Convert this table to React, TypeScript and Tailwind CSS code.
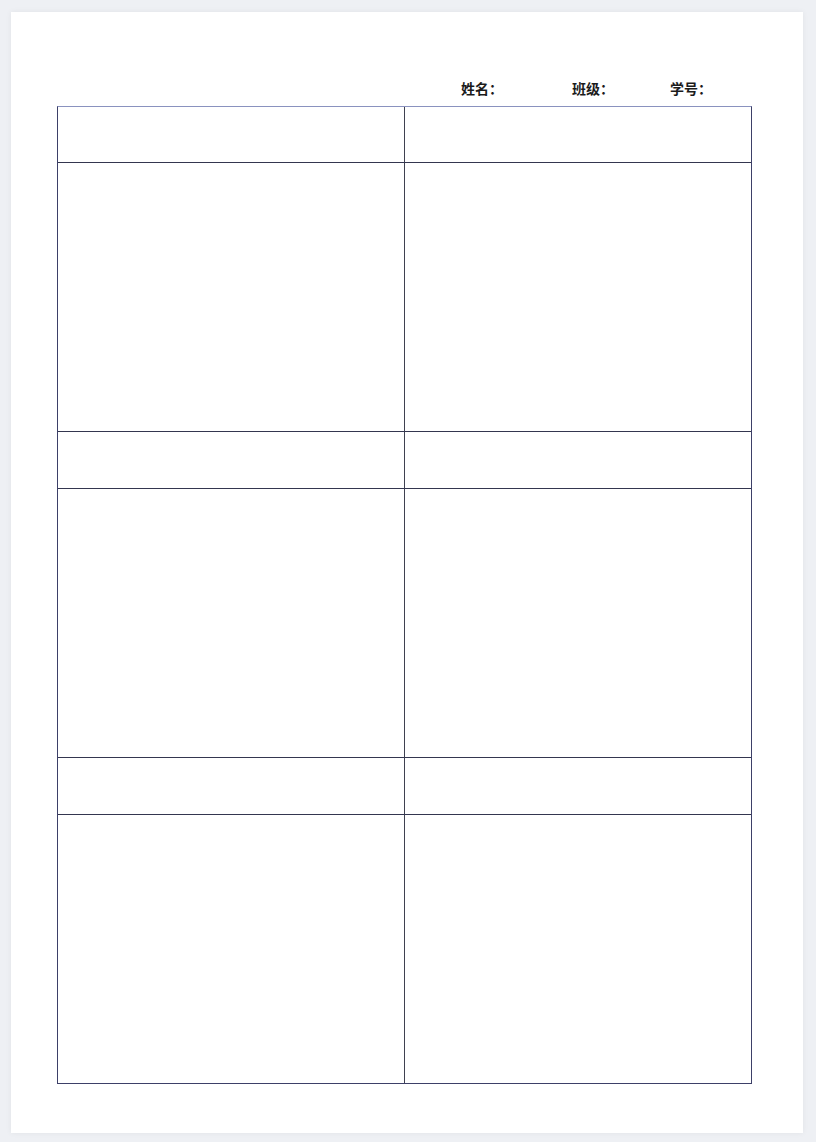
const rows = [
  { h: 'h-[56px]', tall: false },
  { h: 'h-[269px]', tall: true },
  { h: 'h-[57px]', tall: false },
  { h: 'h-[269px]', tall: true },
  { h: 'h-[57px]', tall: false },
  { h: 'h-[268px]', tall: true },
]

export default function App() {
  return (
    <div className="min-h-screen bg-[#eef0f4] pt-[12px] pl-[11px]">
      <div
        className="w-[792px] h-[1121px] bg-white shadow-[0_0_6px_rgba(0,0,0,0.06)] pt-[66px]"
        style={{ fontFamily: '"Noto Sans CJK SC", "Noto Sans", sans-serif' }}
      >
        <div className="flex h-[20px] items-center pl-[450px] text-[14px] font-bold leading-none text-[#1b1b1b]">
          <span className="w-[111px]">姓名：</span>
          <span className="w-[98px]">班级：</span>
          <span>学号：</span>
        </div>
        <div className="ml-[46px] mt-[8px] w-[695px] border border-[#3d4068] border-t-[#8a92bf]">
          {rows.map((row, i) => (
            <div
              key={i}
              className={`grid grid-cols-[347px_1fr] ${row.h} ${
                i < rows.length - 1 ? 'border-b border-[#34364f]' : ''
              }`}
            >
              <div className="border-r border-[#3f4150]" />
              <div />
            </div>
          ))}
        </div>
      </div>
    </div>
  )
}
